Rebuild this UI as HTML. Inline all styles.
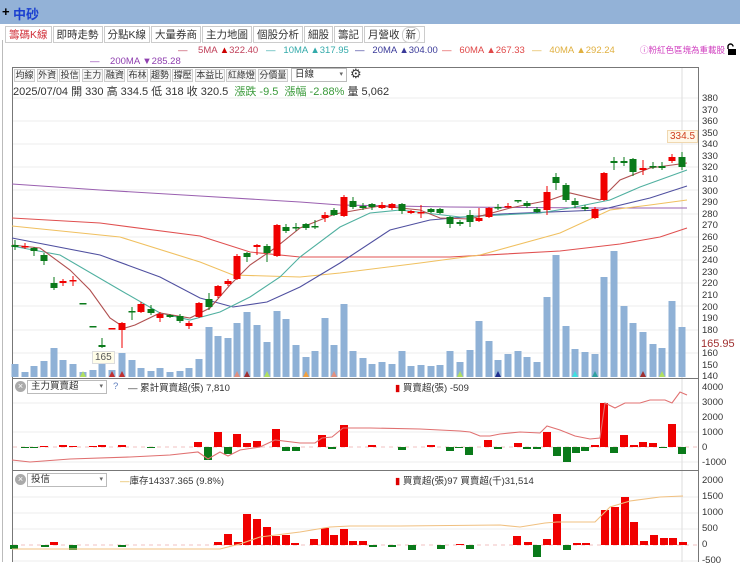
<!DOCTYPE html>
<html><head><meta charset="utf-8">
<style>
*{margin:0;padding:0;box-sizing:border-box}
body{width:740px;height:562px;overflow:hidden;background:#fff;font-family:"Liberation Sans","Noto Sans CJK TC",sans-serif;position:relative;color:#333}
.top{position:absolute;left:0;top:0;width:740px;height:24px;background:#93b2d7}
.top .plus{position:absolute;left:2px;top:4px;font-size:13px;color:#000;font-weight:bold}
.top .name{position:absolute;left:13px;top:4px;font-size:13px;color:#1a3fd0;font-weight:bold}
.tabs{position:absolute;left:5px;top:26px;height:17px;display:flex}
.tabs span{font-size:10.5px;border:1px solid #ccc;padding:1px 3px;margin-right:1px;height:17px;line-height:14px;background:#fff;color:#333}
.tabs span.on{color:#d0303a}
.badge{background:#f08a30;color:#fff;border-radius:7px;font-size:8px;padding:0 4px;margin-left:2px}
.lg{position:absolute;font-size:9.5px;white-space:nowrap}
.tb{position:absolute;left:14px;top:69px;display:flex}
.tb span{font-size:9px;border:1px solid #ccc;margin-right:1.6px;height:13px;line-height:11px;background:#f6f6f6;text-align:center;width:21px;overflow:hidden}
.tb span.w3{width:30px}
.info{position:absolute;left:13px;top:83px;font-size:11px;white-space:nowrap}
.ax{position:absolute;font-size:9.5px;color:#333;left:702px}
.sel{position:absolute;border:1px solid #bbb;font-size:9.5px;height:14px;width:80px;padding-left:3px;line-height:12px;background:#fff}
.sel:after{content:"▾";position:absolute;right:3px;top:0;font-size:7px;color:#666}
.x{position:absolute;width:11px;height:11px;border-radius:50%;background:#aaa;color:#fff;font-size:9px;line-height:11px;text-align:center}
</style></head><body>
<div class="top"><span class="plus">+</span><span class="name">中砂</span></div>
<div style="position:absolute;left:2px;top:40px;width:1px;height:522px;background:#bbb"></div>
<div class="tabs"><span class="on">籌碼K線</span><span>即時走勢</span><span>分點K線</span><span>大量券商</span><span>主力地圖</span><span>個股分析</span><span>細股</span><span>籌記</span><span>月營收<span class="badge">新</span></span></div>
<div class="lg" style="left:178px;top:45px;color:#c0405a">—&nbsp;&nbsp;&nbsp; 5MA <span style="color:#c00">▲</span>322.40</div>
<div class="lg" style="left:266px;top:45px;color:#3aa"><span>—</span>&nbsp;&nbsp; 10MA <span>▲</span>317.95</div>
<div class="lg" style="left:355px;top:45px;color:#3a3a99">—&nbsp;&nbsp; 20MA ▲304.00</div>
<div class="lg" style="left:442px;top:45px;color:#e04848">—&nbsp;&nbsp; 60MA ▲267.33</div>
<div class="lg" style="left:532px;top:45px;color:#e0b040">—&nbsp;&nbsp; 40MA ▲292.24</div>
<div class="lg" style="left:640px;top:44px;color:#d040c0;font-size:8.5px">ⓘ粉紅色區塊為重載股</div>
<svg style="position:absolute;left:725px;top:43px" width="12" height="13"><path d="M3 6 V3.5 A2.5 2.5 0 0 1 8 3.5" fill="none" stroke="#000" stroke-width="1.4"/><rect x="3" y="6" width="8" height="6" fill="#000"/></svg>
<div class="lg" style="left:90px;top:56px;color:#9040b0">—&nbsp;&nbsp;&nbsp; 200MA ▼285.28</div>
<div style="position:absolute;left:12px;top:67px;width:687px;height:495px;border:1px solid #777;border-bottom:none"></div>
<div class="tb"><span>均線</span><span>外資</span><span>投信</span><span>主力</span><span>融資</span><span>布林</span><span>趨勢</span><span>撐壓</span><span class="w3">本益比</span><span class="w3">紅綠燈</span><span class="w3">分價量</span></div>
<div class="sel" style="left:291px;top:68px;width:56px">日線</div>
<div class="lg" style="left:350px;top:66px;font-size:13px;color:#333">⚙</div>
<div class="info">2025/07/04 開 330 高 334.5 低 318 收 320.5 &nbsp;<span style="color:#3a9a3a">漲跌 -9.5 &nbsp;漲幅 -2.88%</span> 量 5,062</div>

<div class="ax" style="top:93px">380</div><div class="ax" style="top:105px">370</div><div class="ax" style="top:116px">360</div><div class="ax" style="top:128px">350</div><div class="ax" style="top:139px">340</div><div class="ax" style="top:151px">330</div><div class="ax" style="top:162px">320</div><div class="ax" style="top:174px">310</div><div class="ax" style="top:186px">300</div><div class="ax" style="top:197px">290</div><div class="ax" style="top:209px">280</div><div class="ax" style="top:220px">270</div><div class="ax" style="top:232px">260</div><div class="ax" style="top:244px">250</div><div class="ax" style="top:255px">240</div><div class="ax" style="top:267px">230</div><div class="ax" style="top:278px">220</div><div class="ax" style="top:290px">210</div><div class="ax" style="top:302px">200</div><div class="ax" style="top:313px">190</div><div class="ax" style="top:325px">180</div><div class="ax" style="top:348px">160</div><div class="ax" style="top:360px">150</div><div class="ax" style="top:371px">140</div>
<div class="ax" style="top:338px;font-size:11px;color:#a03030;left:701px">165.95</div>
<div class="ax" style="top:382px">4000</div><div class="ax" style="top:397px">3000</div><div class="ax" style="top:412px">2000</div><div class="ax" style="top:427px">1000</div><div class="ax" style="top:442px">0</div><div class="ax" style="top:457px">-1000</div>
<div class="ax" style="top:475px">2000</div><div class="ax" style="top:491px">1500</div><div class="ax" style="top:507px">1000</div><div class="ax" style="top:523px">500</div><div class="ax" style="top:539px">0</div><div class="ax" style="top:555px">-500</div>

<svg id="s" width="740" height="562" style="position:absolute;left:0;top:0" xmlns="http://www.w3.org/2000/svg"></svg>

<div style="position:absolute;left:667px;top:130px;font-size:10px;color:#d04020;background:#fff8e8;border:1px solid #f0d8b0;padding:0 2px">334.5</div>
<div style="position:absolute;left:92px;top:351px;font-size:10px;color:#555;background:#fffde8;border:1px solid #ddd;padding:0 2px">165</div>
<div style="position:absolute;left:12px;top:378px;width:687px;height:1px;background:#777"></div>
<div style="position:absolute;left:12px;top:470px;width:687px;height:1px;background:#777"></div>
<div class="x" style="left:15px;top:381px">×</div><div class="sel" style="left:27px;top:380px;width:80px">主力買賣超</div>
<div class="lg" style="left:113px;top:381px;color:#6080c0">?</div>
<div class="lg" style="left:128px;top:380px;color:#333">—<span> 累計買賣超(張) 7,810</span></div>
<div class="lg" style="left:395px;top:380px;color:#333"><span style="color:#d00">▮</span> 買賣超(張) -509</div>
<div class="x" style="left:15px;top:474px">×</div><div class="sel" style="left:27px;top:473px;width:80px">投信</div>
<div class="lg" style="left:120px;top:473px;color:#333"><span style="color:#e0b040">—</span>庫存14337.365 (9.8%)</div>
<div class="lg" style="left:395px;top:473px;color:#333"><span style="color:#d00">▮</span> 買賣超(張)97 買賣超(千)31,514</div>

<script>
var s=document.getElementById('s'),h='';
function L(pts,c,w){h+='<polyline fill="none" stroke="'+c+'" stroke-width="'+(w||1.1)+'" points="'+pts+'"/>';}
function R(x,y,w,hh,c){h+='<rect x="'+x+'" y="'+y+'" width="'+w+'" height="'+hh+'" fill="'+c+'"/>';}
[98,121,144,167,190,214,237,260,283,306,330,353].forEach(function(y){h+='<line x1="13" x2="698" y1="'+y+'" y2="'+y+'" stroke="#eee"/>';});
[403,432,462,497,513,529,561].forEach(function(y){h+='<line x1="13" x2="698" y1="'+y+'" y2="'+y+'" stroke="#eee"/>';});
h+='<line x1="682" x2="682" y1="68" y2="562" stroke="#ddd"/>';
var vx=[15,25,34,44,54,63,73,83,93,102,112,122,132,141,151,160,170,180,189,199,209,218,228,237,247,257,267,277,286,296,306,315,325,334,344,353,363,372,382,392,402,411,421,431,440,450,460,470,479,489,498,508,518,527,537,547,556,566,575,585,595,604,614,624,633,643,653,662,672,682];
var vt=[364,372,366,361,348,360,364,372,370,357,370,353,360,368,371,368,372,371,368,359,327,336,338,323,312,325,342,311,319,345,357,351,318,345,304,351,358,364,362,364,351,366,365,366,365,351,362,350,321,341,360,354,351,357,362,297,255,326,349,352,354,277,251,306,323,332,344,348,301,327];
for(var i=0;i<vx.length;i++)R(vx[i]-3.5,vt[i],7,377-vt[i],'#8fb1d6');
[[83,'#b0e060'],[112,'#c03030'],[122,'#c03030'],[237,'#e09080'],[247,'#a03030'],[267,'#b0e060'],[306,'#f0a040'],[334,'#e09080'],[460,'#b0e060'],[498,'#203090'],[575,'#40e0e0'],[595,'#30a0a0'],[643,'#a03030'],[662,'#b0e060']].forEach(function(t){h+='<polygon points="'+(t[0]-3)+',377 '+(t[0]+3)+',377 '+t[0]+',371" fill="'+t[1]+'"/>';});
L('12,184 100,190 200,196 300,202 340,205 450,207 600,208 687,208','#9a60b0');
L('12,218 100,223 200,236 250,252 300,257 450,257 560,251 620,244 660,237 687,228','#e05050');
L('12,226 120,237 200,262 233,275 300,277 340,273 420,263 480,255 560,233 610,210 650,205 687,200','#f0c060');
L('12,238 100,255 160,277 200,298 233,307 267,302 300,287 340,263 390,230 430,220 500,214 600,210 650,198 687,186','#5050a0');
L('12,246 60,255 120,290 160,313 190,320 220,312 250,297 280,277 300,257 340,227 370,213 400,210 460,217 540,213 570,208 610,200 640,187 687,170','#50b0a0');
L('12,245 40,248 70,270 90,290 110,318 125,328 135,325 160,313 190,318 210,308 230,285 250,265 275,248 300,228 335,214 380,206 420,210 440,218 470,219 510,208 550,200 570,193 600,200 620,180 650,168 687,163','#b05050');
var C=[[15,245,247,240,250,'g'],[25,246,247,243,249,'r'],[34,248,251,247,256,'g'],[44,255,261,253,265,'g'],[54,283,288,277,290,'g'],[63,281,283,279,286,'r'],[73,280,281,276,286,'r'],[83,303,304,303,304,'g'],[93,326,327,326,327,'g'],[102,345,347,338,348,'g'],[112,328,329,328,329,'r'],[122,323,330,322,348,'r'],[132,311,312,307,320,'g'],[141,304,312,302,313,'r'],[151,309,313,305,315,'g'],[160,314,318,312,322,'r'],[170,315,317,314,318,'g'],[180,316,321,314,323,'g'],[189,323,326,321,329,'r'],[199,303,317,302,318,'r'],[209,299,307,293,310,'g'],[218,286,296,285,298,'r'],[228,281,284,279,286,'r'],[237,256,279,254,280,'r'],[247,253,257,252,262,'g'],[257,245,247,244,255,'r'],[267,246,253,244,262,'g'],[277,225,256,224,257,'r'],[286,227,231,224,233,'g'],[296,227,228,223,231,'g'],[306,224,228,223,230,'g'],[315,226,227,220,229,'g'],[325,215,218,212,222,'r'],[334,210,215,208,216,'g'],[344,197,216,195,217,'r'],[353,201,207,197,209,'g'],[363,206,208,203,210,'g'],[372,204,207,203,210,'g'],[382,205,208,202,209,'r'],[392,204,208,203,210,'r'],[402,204,211,203,214,'g'],[411,211,213,210,214,'r'],[421,212,213,205,218,'r'],[431,209,212,208,213,'g'],[440,209,213,208,214,'g'],[450,217,224,216,228,'g'],[460,222,224,220,226,'g'],[470,215,222,210,227,'g'],[479,218,221,208,222,'r'],[489,208,217,207,218,'r'],[498,207,208,204,210,'g'],[508,206,207,203,208,'r'],[518,200,201,200,203,'g'],[527,203,206,201,208,'g'],[537,209,212,207,213,'g'],[547,192,210,186,215,'r'],[556,177,183,173,190,'g'],[566,185,200,183,202,'g'],[575,201,205,198,208,'g'],[585,207,209,205,211,'g'],[595,209,218,207,219,'r'],[604,173,200,172,201,'r'],[614,161,163,157,170,'g'],[624,161,163,157,166,'g'],[633,159,172,158,176,'g'],[643,168,170,160,175,'r'],[653,166,167,162,169,'g'],[662,166,168,162,170,'g'],[672,157,161,154,163,'r'],[682,157,167,152,170,'g']];
C.forEach(function(c){var col=c[5]=='r'?'#f00000':'#0a7a1a';h+='<line x1="'+c[0]+'" x2="'+c[0]+'" y1="'+c[3]+'" y2="'+c[4]+'" stroke="'+col+'"/>';R(c[0]-3.5,c[1],7,Math.max(1.5,c[2]-c[1]),col);});
h+='<line x1="13" x2="698" y1="447" y2="447" stroke="#f0c0c0" stroke-dasharray="4,4"/>';
var P2=[[25,-1],[34,-1],[44,1],[63,2],[73,1],[93,1],[102,2],[122,2],[151,-1],[198,5],[208,-13],[218,15],[228,-7],[237,13],[247,4],[257,6],[276,18],[286,-4],[296,-4],[322,12],[332,-2],[344,22],[372,2],[402,-3],[431,2],[450,-4],[459,-1],[469,-8],[488,7],[498,-2],[518,4],[527,-2],[537,-2],[547,15],[557,-9],[567,-15],[576,-6],[585,-4],[595,2],[604,44],[614,-6],[624,12],[634,2],[643,5],[653,4],[663,-1],[672,23],[682,-7]];
P2.forEach(function(b){var col=b[1]>0?'#f00000':'#0a7a1a';if(b[1]>0)R(b[0]-4,447-b[1],8,b[1],col);else R(b[0]-4,447,8,-b[1],col);});
L('12,460 30,462 70,459 130,457 170,455 198,452 208,459 220,452 228,456 240,450 260,447 275,440 300,443 315,443 322,438 332,437 343,428 370,428 420,429 460,431 470,432 480,436 490,436 500,434 520,432 540,433 547,426 560,430 575,436 590,439 600,438 605,403 615,408 625,403 640,403 650,400 665,400 672,403 680,392 687,395','#e07070');
h+='<line x1="13" x2="698" y1="545" y2="545" stroke="#f0c0c0" stroke-dasharray="4,4"/>';
var P3=[[14,-4],[45,-2],[54,3],[73,-5],[122,-2],[218,3],[228,11],[238,3],[247,31],[257,26],[267,18],[276,9],[286,10],[295,2],[314,6],[325,17],[334,10],[344,16],[353,4],[363,4],[373,-2],[392,-2],[412,-5],[441,-4],[460,1],[470,-4],[517,9],[528,3],[537,-12],[547,6],[557,31],[567,-5],[577,2],[586,2],[605,35],[615,38],[625,48],[634,23],[644,4],[654,10],[664,7],[673,7],[683,3]];
P3.forEach(function(b){var col=b[1]>0?'#f00000':'#0a7a1a';if(b[1]>0)R(b[0]-4,545-b[1],8,b[1],col);else R(b[0]-4,545,8,-b[1],col);});
L('12,549 220,549 240,544 260,537 300,532 330,527 350,526 400,526 500,525 520,527 545,523 557,522 595,522 610,507 630,501 660,497 683,496','#f0c080');
s.innerHTML=h;
</script>
</body></html>
